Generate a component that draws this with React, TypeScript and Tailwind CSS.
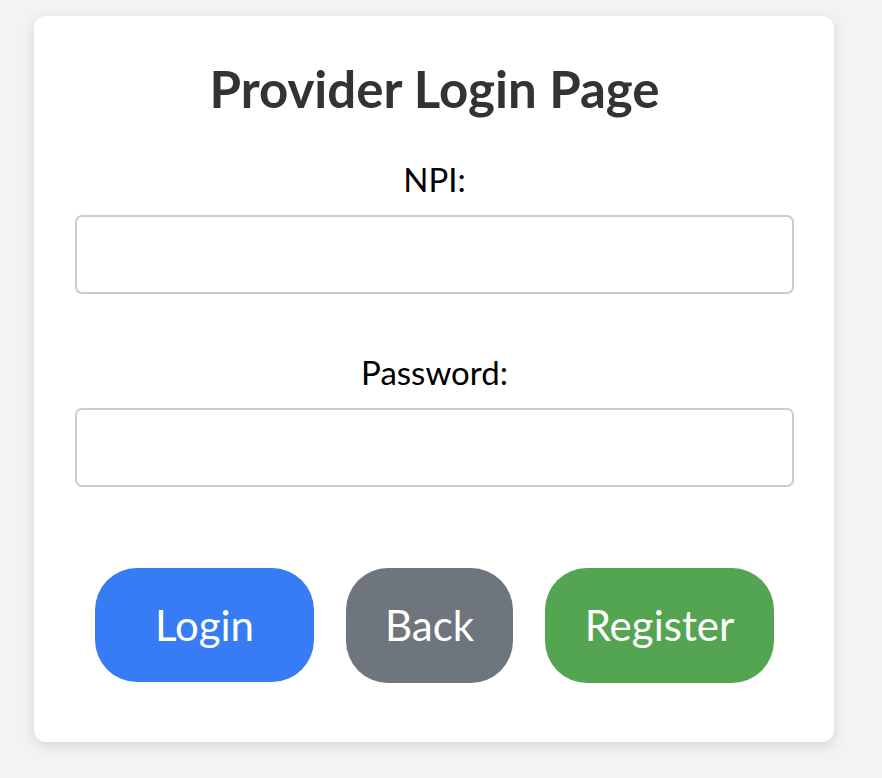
import { useState } from "react";

export default function App() {
  const [npi, setNpi] = useState("");
  const [password, setPassword] = useState("");

  return (
    <div className="min-h-screen bg-[#f3f3f3] pl-[34px] pt-[16px] font-['Lato','Noto_Sans',sans-serif]">
      <div className="w-[800px] h-[726px] bg-white rounded-[12px] shadow-[0_4px_14px_rgba(0,0,0,0.12)] pt-[43px] pl-[41px] pr-[40px]">
        <h1 className="text-center text-[51px] leading-[60px] font-bold text-[#333333]">
          Provider Login Page
        </h1>

        <form className="mt-[41px]" onSubmit={(e) => e.preventDefault()}>
          <label className="block text-center text-[33px] leading-[38px] text-black">NPI:</label>
          <input
            type="text"
            value={npi}
            onChange={(e) => setNpi(e.target.value)}
            className="mt-[17px] block w-full h-[79px] rounded-[7px] border-2 border-[#cccccc] px-4 text-[28px] outline-none"
          />

          <label className="mt-[59px] block text-center text-[33px] leading-[38px] text-black">Password:</label>
          <input
            type="password"
            value={password}
            onChange={(e) => setPassword(e.target.value)}
            className="mt-[17px] block w-full h-[79px] rounded-[7px] border-2 border-[#cccccc] px-4 text-[28px] outline-none"
          />

          <div className="mt-[81px] flex justify-center gap-[32px]">
            <button className="w-[219px] h-[114px] rounded-[42px] bg-[#377bf5] text-white text-[42px]">Login</button>
            <button className="w-[167px] h-[115px] rounded-[42px] bg-[#6e757d] text-white text-[42px]">Back</button>
            <button className="w-[229px] h-[115px] rounded-[42px] bg-[#54a552] text-white text-[42px]">Register</button>
          </div>
        </form>
      </div>
    </div>
  );
}
